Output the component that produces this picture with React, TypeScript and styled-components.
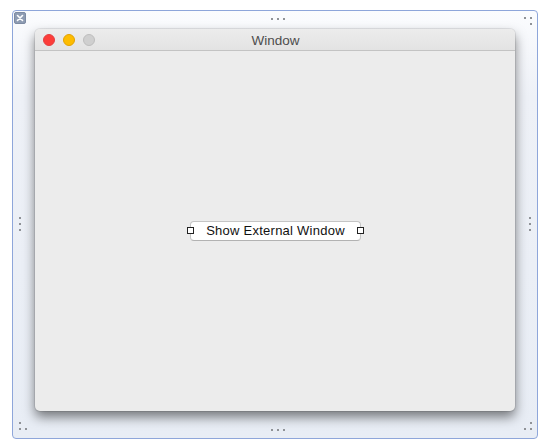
import React from 'react';
import styled, { createGlobalStyle } from 'styled-components';

const GlobalStyle = createGlobalStyle`
  html, body {
    margin: 0;
    padding: 0;
    background: #ffffff;
    font-family: "Liberation Sans", Arial, sans-serif;
  }
`;

const Page = styled.div`
  width: 548px;
  height: 445px;
  padding: 10px 0 0 12px;
  box-sizing: border-box;
`;

const Frame = styled.div`
  position: relative;
  width: 526px;
  height: 429px;
  box-sizing: border-box;
  border: 1px solid #8ea6da;
  border-radius: 4px;
  background: linear-gradient(to bottom, #fbfcfe 0%, #eef1f7 20%, #e8edf5 100%);
  padding: 18px 0 0 22px;
`;

const CloseBadge = styled.div`
  position: absolute;
  left: 1px;
  top: 1px;
  width: 12px;
  height: 12px;
  border-radius: 2px;
  background: #8e9cb3;
  border: 1px solid #7d8ba3;
  box-sizing: border-box;
  display: flex;
  align-items: center;
  justify-content: center;
`;

const Dots = styled.div<{ $vertical?: boolean }>`
  position: absolute;
  display: flex;
  flex-direction: ${(p) => (p.$vertical ? 'column' : 'row')};
  gap: 4px;
`;

const Dot = styled.span`
  width: 2px;
  height: 2px;
  background: #8f9297;
  display: block;
`;

const CornerGrip = styled.div`
  position: absolute;
  width: 8px;
  height: 8px;
  display: grid;
  grid-template-columns: 2px 2px;
  grid-template-rows: 2px 2px;
  column-gap: 4px;
  row-gap: 4px;
`;

const GripDot = styled.span<{ $off?: boolean }>`
  width: 2px;
  height: 2px;
  background: ${(p) => (p.$off ? 'transparent' : '#8f9297')};
`;

const Window = styled.div`
  width: 480px;
  height: 382px;
  border-radius: 5px;
  background: #ececec;
  display: flex;
  flex-direction: column;
  overflow: hidden;
  box-shadow: 0 0 0 1px rgba(0, 0, 0, 0.08), 0 6px 12px rgba(0, 0, 0, 0.5);
`;

const TitleBar = styled.div`
  position: relative;
  height: 21px;
  flex: none;
  display: flex;
  align-items: center;
  justify-content: center;
  background: linear-gradient(to bottom, #ececec, #e3e3e3);
  border-bottom: 1px solid #c3c3c3;
`;

const Lights = styled.div`
  position: absolute;
  left: 8px;
  top: 5px;
  display: flex;
  gap: 8px;
`;

const Light = styled.span<{ $color: string; $edge: string }>`
  width: 12px;
  height: 12px;
  border-radius: 50%;
  box-sizing: border-box;
  background: ${(p) => p.$color};
  border: 1px solid ${(p) => p.$edge};
`;

const Title = styled.div`
  font-size: 13.5px;
  color: #4d4d4d;
  line-height: 21px;
  margin: 2px 0 0 1px;
`;

const Content = styled.div`
  flex: 1;
  display: flex;
  align-items: center;
  justify-content: center;
  padding-bottom: 1px;
`;

const ButtonWrap = styled.div`
  position: relative;
  display: flex;
  margin-left: 1px;
`;

const PushButton = styled.div`
  width: 171px;
  height: 20px;
  box-sizing: border-box;
  background: #ffffff;
  border: 1px solid #c5c5c5;
  border-bottom-color: #b2b2b2;
  border-radius: 4px;
  font-size: 13px;
  letter-spacing: 0.25px;
  color: #111;
  display: flex;
  align-items: center;
  justify-content: center;
  padding-bottom: 1px;
`;

const Handle = styled.span<{ $side: 'left' | 'right' }>`
  position: absolute;
  top: 6px;
  ${(p) => (p.$side === 'left' ? 'left: -3px;' : 'right: -3px;')}
  width: 7px;
  height: 7px;
  box-sizing: border-box;
  background: #ffffff;
  border: 1px solid #222;
`;

export default function App() {
  return (
    <>
      <GlobalStyle />
      <Page>
        <Frame>
          <CloseBadge>
            <svg width="8" height="8" viewBox="0 0 8 8">
              <path d="M1.5 1.5 L6.5 6.5 M6.5 1.5 L1.5 6.5" stroke="#ffffff" strokeWidth="1.6" strokeLinecap="round" />
            </svg>
          </CloseBadge>

          <Dots style={{ left: 258, top: 7 }}>
            <Dot /><Dot /><Dot />
          </Dots>
          <Dots style={{ left: 258, top: 418 }}>
            <Dot /><Dot /><Dot />
          </Dots>
          <Dots $vertical style={{ left: 6, top: 206 }}>
            <Dot /><Dot /><Dot />
          </Dots>
          <Dots $vertical style={{ left: 516, top: 206 }}>
            <Dot /><Dot /><Dot />
          </Dots>

          <CornerGrip style={{ left: 511, top: 6 }}>
            <GripDot /><GripDot /><GripDot $off /><GripDot />
          </CornerGrip>
          <CornerGrip style={{ left: 6, top: 411 }}>
            <GripDot /><GripDot $off /><GripDot /><GripDot />
          </CornerGrip>
          <CornerGrip style={{ left: 511, top: 411 }}>
            <GripDot $off /><GripDot /><GripDot /><GripDot />
          </CornerGrip>

          <Window>
            <TitleBar>
              <Lights>
                <Light $color="#fc3d39" $edge="#e33e41" />
                <Light $color="#fdbc00" $edge="#e2a100" />
                <Light $color="#cfcfcf" $edge="#bdbdbd" />
              </Lights>
              <Title>Window</Title>
            </TitleBar>
            <Content>
              <ButtonWrap>
                <PushButton>Show External Window</PushButton>
                <Handle $side="left" />
                <Handle $side="right" />
              </ButtonWrap>
            </Content>
          </Window>
        </Frame>
      </Page>
    </>
  );
}
